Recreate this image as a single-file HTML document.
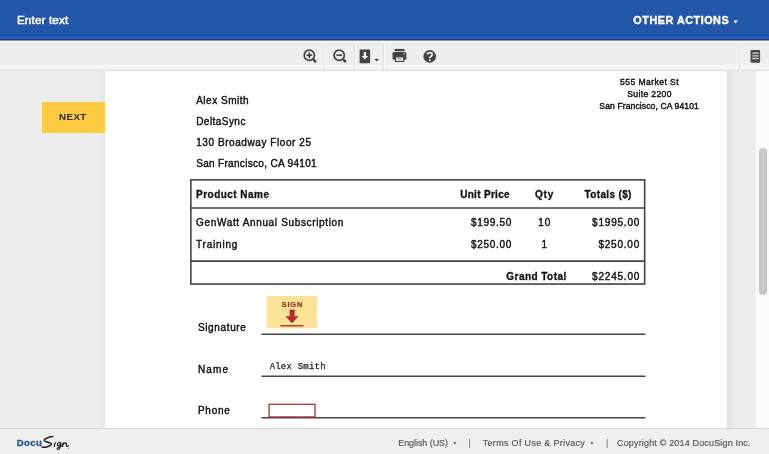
<!DOCTYPE html>
<html><head><meta charset="utf-8">
<style>
*{box-sizing:border-box;margin:0;padding:0}
html,body{width:769px;height:454px;overflow:hidden;background:#fff;font-family:"Liberation Sans",sans-serif;}
body{position:relative}
.abs{position:absolute}
.t{position:absolute;white-space:pre}
#hdr{left:0;top:0;width:769px;height:41px;background:linear-gradient(#2256a9 0,#2256a9 33.5px,#1f539f 34.5px,#1f539f 36px,#2659b1 37px,#2659b1 38.6px,#1a3b82 39.2px,#1b3f88 40px,#8fa3c8 40.6px,#f0f6fb 41px)}
#hdrline{left:0;top:41px;width:769px;height:2px;background:linear-gradient(#f6fdff,#f4f8f8)}
#tb{left:0;top:43px;width:769px;height:21px;background:linear-gradient(#e9e9e6 0,#eeeeee 3px)}
#tbline{left:0;top:64px;width:769px;height:8px;background:linear-gradient(#eee 0,#f4f4f4 2px,#f4f4f4 5px,#dedede 6.5px,#dedede 7.5px,#ebebeb 8px)}
#bg{left:0;top:71px;width:769px;height:358px;background:#ededed}
#doc{left:105px;top:71px;width:622px;height:358px;background:#fff}
#redge{left:727px;top:71px;width:8px;height:358px;background:linear-gradient(90deg,#dfdfdf 0,#e6e6e6 1.5px,#eaeaea 7px,#ededed 8px)}
#ledge{left:97px;top:71px;width:8px;height:358px;background:linear-gradient(90deg,#ededed,#e6e6e6)}
#sb{left:755px;top:71px;width:14px;height:358px;background:linear-gradient(90deg,#f3f3f3,#fbfbfb 3px,#fcfcfc)}
#thumb{left:759px;top:147.5px;width:8px;height:147.5px;background:linear-gradient(90deg,#c2c2c2,#cdcdcd 50%,#c2c2c2);border-radius:4px}
#next{left:42px;top:102px;width:63px;height:31px;background:#fccb41}
#ftr{left:0;top:428px;width:769px;height:26px;background:#efefef;border-top:1px solid #d6d6d6}
#ov{left:0;top:0;width:769px;height:454px}
</style></head><body>
<div id="hdr" class="abs"></div>
<div id="hdrline" class="abs"></div>
<div id="tb" class="abs"></div>
<div id="tbline" class="abs"></div>
<div id="bg" class="abs"></div>
<div id="doc" class="abs"></div>
<div id="redge" class="abs"></div>
<div id="ledge" class="abs"></div>
<div id="sb" class="abs"></div>
<div id="thumb" class="abs"></div>
<div id="next" class="abs"></div>
<div id="ftr" class="abs"></div>
<svg id="ov" class="abs" width="769" height="454" viewBox="0 0 769 454">
 <!-- table -->
 <g stroke="#444" stroke-width="1.6" fill="none">
  <rect x="190.85" y="179.85" width="453.8" height="104.2"/>
  <line x1="190.85" y1="208.05" x2="644.65" y2="208.05"/>
  <line x1="190.85" y1="261.1" x2="644.65" y2="261.1"/>
  <line x1="261.5" y1="334.2" x2="645.5" y2="334.2"/>
  <line x1="261.5" y1="376.3" x2="645.5" y2="376.3"/>
  <line x1="261.5" y1="417.8" x2="645.5" y2="417.8"/>
 </g>
 <!-- sign tab -->
 <rect x="266.7" y="296" width="50.1" height="32.3" fill="#fde398"/>
 <g fill="#b5282c">
  <rect x="289.6" y="309.6" width="5" height="7"/>
  <path d="M285.4 316.3 L298.6 316.3 L292 323.2 Z"/>
  <rect x="280.5" y="325" width="23" height="1.5" fill="#b5452c"/>
 </g>
 <!-- phone box -->
 <rect x="269.1" y="404.3" width="45.9" height="12.6" fill="#fff" stroke="#b0303c" stroke-width="1.3"/>
 <!-- header caret -->
 <path d="M733.3 20.6 L737.9 20.6 L735.6 23.6 Z" fill="#fff"/>
 <!-- footer carets -->
 <path d="M453.2 442.3 L456.4 442.3 L454.8 444.5 Z" fill="#555"/>
 <path d="M590.3 442.3 L593.5 442.3 L591.9 444.5 Z" fill="#555"/>
 <!-- toolbar separators -->
 <g stroke="#e0e0e0" stroke-width="1">
  <line x1="323.5" y1="43" x2="323.5" y2="70"/>
  <line x1="354.5" y1="43" x2="354.5" y2="70"/>
  <line x1="383.5" y1="43" x2="383.5" y2="70"/>
  <line x1="739.5" y1="43" x2="739.5" y2="71"/>
 </g>
 <g stroke="#f9f9f9" stroke-width="1">
  <line x1="324.5" y1="43" x2="324.5" y2="70"/>
  <line x1="355.5" y1="43" x2="355.5" y2="70"/>
  <line x1="384.5" y1="43" x2="384.5" y2="70"/>
  <line x1="740.5" y1="43" x2="740.5" y2="71"/>
 </g>
 <!-- zoom in -->
 <g stroke="#444" fill="none" stroke-width="1.7">
  <circle cx="309.3" cy="55.2" r="5.1"/>
  <line x1="313.4" y1="59.4" x2="315.9" y2="62.1" stroke-width="2.4"/>
  <line x1="306.5" y1="55.2" x2="312.1" y2="55.2"/>
  <line x1="309.3" y1="52.4" x2="309.3" y2="58"/>
  <circle cx="339.2" cy="55.2" r="5.1"/>
  <line x1="343.3" y1="59.4" x2="345.8" y2="62.1" stroke-width="2.4"/>
  <line x1="336.4" y1="55.2" x2="342" y2="55.2"/>
 </g>
 <!-- download -->
 <rect x="359.6" y="49.6" width="10.5" height="13.6" rx="0.8" fill="#444"/>
 <path d="M363.7 52 h2.4 v4 h2.2 l-3.4 3.6 l-3.4 -3.6 h2.2 Z" fill="#eee"/>
 <path d="M374.4 58.9 L379 58.9 L376.7 61.6 Z" fill="#444"/>
 <!-- printer -->
 <g fill="#444">
  <rect x="394.7" y="48.9" width="9.8" height="2.3"/>
  <rect x="392.5" y="52" width="13.9" height="7.8" rx="1.6"/>
  <rect x="394.9" y="56.2" width="9.4" height="5.8"/>
 </g>
 <rect x="396.1" y="57.4" width="7" height="3.5" fill="#ececec"/>
 <rect x="397.6" y="58.4" width="3.6" height="0.9" fill="#777"/>
 <circle cx="404.2" cy="53.8" r="0.7" fill="#eee"/>
 <!-- help -->
 <circle cx="429.7" cy="56.4" r="6.3" fill="#444"/>
 <path d="M427.3 54.6 C427.3 51.9 432.2 51.9 432.2 54.6 C432.2 56.3 429.8 56.3 429.8 58.3" stroke="#eee" stroke-width="1.7" fill="none"/>
 <circle cx="429.8" cy="60.3" r="0.95" fill="#eee"/>
 <!-- doc icon right -->
 <rect x="750.5" y="49.9" width="9.6" height="12.8" rx="1" fill="#4a4a4a"/>
 <g stroke="#ddd" stroke-width="1.2">
  <line x1="752.2" y1="53.2" x2="758.8" y2="53.2"/>
  <line x1="752.2" y1="55.9" x2="758.8" y2="55.9"/>
  <line x1="752.2" y1="58.5" x2="758.8" y2="58.5"/>
 </g>
 <!-- DocuSign script "Sign" -->
 <g stroke="#1c1c1c" fill="none" stroke-linecap="round" stroke-linejoin="round">
  <path stroke-width="1.5" d="M52.8 436.6 C48.5 436.9 43.6 438.9 44.3 440.6 C45.2 442.2 52.2 442.6 51.3 444.4 C50.2 446.4 45 447.6 42 447.1"/>
  <path stroke-width="1.2" d="M55.2 442.6 L54.2 446.4"/>
  <path stroke-width="1.1" d="M60.6 442.8 C58.4 442 56.6 443.8 57.4 445.2 C58.2 446.4 60.4 445 60.9 442.8 C60.8 445.4 60.4 448.6 58.6 449.3 C57.2 449.7 56.6 448.4 57.8 447.6 C59.2 446.8 61.4 446.4 62.4 445.4"/>
  <path stroke-width="1.2" d="M63.2 442.8 L62.4 446.4 C63 444.2 64.8 442.4 66 443 C67 443.6 66 445.6 66.6 446.2 C67.2 446.6 67.8 446.2 68.4 445.6"/>
 </g>
 <circle cx="68.4" cy="448.2" r="0.5" fill="#555"/>
</svg>
<div id="tx" style="position:absolute;left:0;top:0;width:769px;height:454px;will-change:transform;transform:translateZ(0);background:transparent">
<div class="t" style="left:16.93px;top:12.00px;font:normal 11.7px/15px 'Liberation Sans',sans-serif;color:#fff;letter-spacing:0.145px;-webkit-text-stroke:0.5px #fff;">Enter text</div>
<div class="t" style="left:633.37px;top:13.00px;font:bold 10.8px/14px 'Liberation Sans',sans-serif;color:#fff;letter-spacing:0.523px;-webkit-text-stroke:0.4px #fff;">OTHER ACTIONS</div>
<div class="t" style="left:58.91px;top:110.00px;font:bold 9.7px/13px 'Liberation Sans',sans-serif;color:#2a2a2a;letter-spacing:0.511px;">NEXT</div>
<div class="t" style="left:196.20px;top:94.00px;font:normal 10px/13px 'Liberation Sans',sans-serif;color:#111;letter-spacing:0.511px;-webkit-text-stroke:0.4px #111;">Alex Smith</div>
<div class="t" style="left:196.20px;top:115.00px;font:normal 10px/13px 'Liberation Sans',sans-serif;color:#111;letter-spacing:0.453px;-webkit-text-stroke:0.4px #111;">DeltaSync</div>
<div class="t" style="left:196.20px;top:136.00px;font:normal 10px/13px 'Liberation Sans',sans-serif;color:#111;letter-spacing:0.570px;-webkit-text-stroke:0.4px #111;">130 Broadway Floor 25</div>
<div class="t" style="left:196.20px;top:157.00px;font:normal 10px/13px 'Liberation Sans',sans-serif;color:#111;letter-spacing:0.318px;-webkit-text-stroke:0.4px #111;">San Francisco, CA 94101</div>
<div class="t" style="left:620.06px;top:76.00px;font:normal 8.6px/12px 'Liberation Sans',sans-serif;color:#111;letter-spacing:0.416px;-webkit-text-stroke:0.4px #111;">555 Market St</div>
<div class="t" style="left:627.16px;top:88.00px;font:normal 8.6px/12px 'Liberation Sans',sans-serif;color:#111;letter-spacing:0.355px;-webkit-text-stroke:0.4px #111;">Suite 2200</div>
<div class="t" style="left:599.36px;top:100.00px;font:normal 8.6px/12px 'Liberation Sans',sans-serif;color:#111;letter-spacing:0.092px;-webkit-text-stroke:0.4px #111;">San Francisco, CA 94101</div>
<div class="t" style="left:196.10px;top:188.00px;font:bold 10px/13px 'Liberation Sans',sans-serif;color:#111;letter-spacing:0.464px;-webkit-text-stroke:0.3px #111;">Product Name</div>
<div class="t" style="left:460.20px;top:188.00px;font:bold 10px/13px 'Liberation Sans',sans-serif;color:#111;letter-spacing:0.301px;-webkit-text-stroke:0.3px #111;">Unit Price</div>
<div class="t" style="left:534.90px;top:188.00px;font:bold 10px/13px 'Liberation Sans',sans-serif;color:#111;letter-spacing:0.914px;-webkit-text-stroke:0.3px #111;">Qty</div>
<div class="t" style="left:584.60px;top:188.00px;font:bold 10px/13px 'Liberation Sans',sans-serif;color:#111;letter-spacing:0.342px;-webkit-text-stroke:0.3px #111;">Totals ($)</div>
<div class="t" style="left:196.10px;top:216.00px;font:normal 10px/13px 'Liberation Sans',sans-serif;color:#111;letter-spacing:0.655px;-webkit-text-stroke:0.4px #111;">GenWatt Annual Subscription</div>
<div class="t" style="left:471.10px;top:216.00px;font:normal 10px/13px 'Liberation Sans',sans-serif;color:#111;letter-spacing:0.691px;-webkit-text-stroke:0.4px #111;">$199.50</div>
<div class="t" style="left:538.30px;top:216.00px;font:normal 10px/13px 'Liberation Sans',sans-serif;color:#111;letter-spacing:0.975px;-webkit-text-stroke:0.4px #111;">10</div>
<div class="t" style="left:592.10px;top:216.00px;font:normal 10px/13px 'Liberation Sans',sans-serif;color:#111;letter-spacing:0.783px;-webkit-text-stroke:0.4px #111;">$1995.00</div>
<div class="t" style="left:196.10px;top:238.00px;font:normal 10px/13px 'Liberation Sans',sans-serif;color:#111;letter-spacing:0.791px;-webkit-text-stroke:0.4px #111;">Training</div>
<div class="t" style="left:471.10px;top:238.00px;font:normal 10px/13px 'Liberation Sans',sans-serif;color:#111;letter-spacing:0.691px;-webkit-text-stroke:0.4px #111;">$250.00</div>
<div class="t" style="left:541.60px;top:238.00px;font:normal 10px/13px 'Liberation Sans',sans-serif;color:#111;letter-spacing:0.000px;-webkit-text-stroke:0.4px #111;">1</div>
<div class="t" style="left:598.40px;top:238.00px;font:normal 10px/13px 'Liberation Sans',sans-serif;color:#111;letter-spacing:0.791px;-webkit-text-stroke:0.4px #111;">$250.00</div>
<div class="t" style="left:506.30px;top:270.00px;font:bold 10px/13px 'Liberation Sans',sans-serif;color:#111;letter-spacing:0.462px;-webkit-text-stroke:0.3px #111;">Grand Total</div>
<div class="t" style="left:592.10px;top:270.00px;font:normal 10px/13px 'Liberation Sans',sans-serif;color:#111;letter-spacing:0.783px;-webkit-text-stroke:0.4px #111;">$2245.00</div>
<div class="t" style="left:197.90px;top:321.00px;font:normal 10px/13px 'Liberation Sans',sans-serif;color:#111;letter-spacing:0.648px;-webkit-text-stroke:0.4px #111;">Signature</div>
<div class="t" style="left:197.90px;top:363.00px;font:normal 10px/13px 'Liberation Sans',sans-serif;color:#111;letter-spacing:1.137px;-webkit-text-stroke:0.4px #111;">Name</div>
<div class="t" style="left:197.90px;top:404.00px;font:normal 10px/13px 'Liberation Sans',sans-serif;color:#111;letter-spacing:0.770px;-webkit-text-stroke:0.4px #111;">Phone</div>
<div class="t" style="left:269.64px;top:361.00px;font:normal 9px/12px 'Liberation Mono',monospace;color:#222;letter-spacing:0.212px;-webkit-text-stroke:0.25px #222;">Alex Smith</div>
<div class="t" style="left:281.70px;top:299.00px;font:bold 7.4px/11px 'Liberation Sans',sans-serif;color:#9c2c22;letter-spacing:0.838px;-webkit-text-stroke:0.2px #9c2c22;">SIGN</div>
<div class="t" style="left:398.24px;top:437.00px;font:normal 9px/12px 'Liberation Sans',sans-serif;color:#555;letter-spacing:-0.063px;-webkit-text-stroke:0.15px #555;">English (US)</div>
<div class="t" style="left:468.44px;top:437.00px;font:normal 9px/12px 'Liberation Sans',sans-serif;color:#666;letter-spacing:0.000px;">|</div>
<div class="t" style="left:482.74px;top:437.00px;font:normal 9px/12px 'Liberation Sans',sans-serif;color:#555;letter-spacing:0.314px;-webkit-text-stroke:0.15px #555;">Terms Of Use &amp; Privacy</div>
<div class="t" style="left:606.04px;top:437.00px;font:normal 9px/12px 'Liberation Sans',sans-serif;color:#666;letter-spacing:0.000px;">|</div>
<div class="t" style="left:617.04px;top:437.00px;font:normal 9px/12px 'Liberation Sans',sans-serif;color:#555;letter-spacing:0.163px;-webkit-text-stroke:0.15px #555;">Copyright © 2014 DocuSign Inc.</div>
<div class="t" style="left:16.72px;top:436.00px;font:bold 9.6px/13px 'Liberation Sans',sans-serif;color:#28538f;letter-spacing:0.395px;-webkit-text-stroke:0.3px #28538f;">Docu</div>
</div>
</body></html>
